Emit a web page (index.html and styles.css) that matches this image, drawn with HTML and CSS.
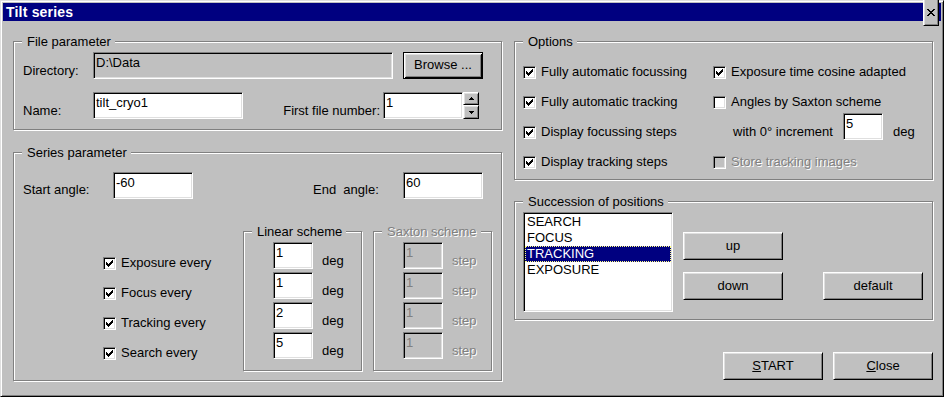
FILE: index.html
```html
<!DOCTYPE html>
<html lang="en">
<head>
    <meta charset="UTF-8">
    <title>Tilt series</title>
    <link rel="stylesheet" href="styles.css">
</head>
<body>
    <div class="window">
        <div class="titlebar">
            <span class="title">Tilt series</span>
            <span class="btn title-close">
                <svg width="8" height="7" viewBox="0 0 8 7"><path d="M0 0h2v1H0zM6 0h2v1H6zM1 1h2v1H1zM5 1h2v1H5zM2 2h4v1H2zM3 3h2v1H3zM2 4h4v1H2zM1 5h2v1H1zM5 5h2v1H5zM0 6h2v1H0zM6 6h2v1H6z"/></svg>
            </span>
        </div>

        <div class="client">
            <div class="col col-left">
                <div class="group group-file">
                    <span class="caption">File parameter</span>
                    <div class="row row-dir">
                        <span class="lbl w70">Directory:</span>
                        <span class="edit off w300">D:\Data</span>
                        <span class="btn btn-default btn-browse">Browse ...</span>
                    </div>
                    <div class="row row-name">
                        <span class="lbl w70">Name:</span>
                        <span class="edit w150">tilt_cryo1</span>
                        <span class="lbl lbl-first">First file number:</span>
                        <span class="edit w80">1</span>
                        <span class="spin">
                            <span class="btn spin-up"><svg width="5" height="3" viewBox="0 0 5 3"><path d="M2 0h1v1H2zM1 1h3v1H1zM0 2h5v1H0z"/></svg></span>
                            <span class="btn spin-down"><svg width="5" height="3" viewBox="0 0 5 3"><path d="M0 0h5v1H0zM1 1h3v1H1zM2 2h1v1H2z"/></svg></span>
                        </span>
                    </div>
                </div>

                <div class="group group-series">
                    <span class="caption">Series parameter</span>
                    <div class="row row-angle">
                        <span class="lbl lbl-angle w90">Start angle:</span>
                        <span class="edit w80">-60</span>
                        <span class="lbl lbl-angle lbl-end w90">End&nbsp; angle:</span>
                        <span class="edit w80">60</span>
                    </div>
                    <div class="row row-schemes">
                        <div class="checks">
                            <div class="check-row"><span class="chk on"><svg width="7" height="7" viewBox="0 0 7 7"><path d="M0 2h1v3H0zM1 3h1v3H1zM2 4h1v3H2zM3 3h1v3H3zM4 2h1v3H4zM5 1h1v3H5zM6 0h1v3H6z"/></svg></span><span>Exposure every</span></div>
                            <div class="check-row"><span class="chk on"><svg width="7" height="7" viewBox="0 0 7 7"><path d="M0 2h1v3H0zM1 3h1v3H1zM2 4h1v3H2zM3 3h1v3H3zM4 2h1v3H4zM5 1h1v3H5zM6 0h1v3H6z"/></svg></span><span>Focus every</span></div>
                            <div class="check-row"><span class="chk on"><svg width="7" height="7" viewBox="0 0 7 7"><path d="M0 2h1v3H0zM1 3h1v3H1zM2 4h1v3H2zM3 3h1v3H3zM4 2h1v3H4zM5 1h1v3H5zM6 0h1v3H6z"/></svg></span><span>Tracking every</span></div>
                            <div class="check-row"><span class="chk on"><svg width="7" height="7" viewBox="0 0 7 7"><path d="M0 2h1v3H0zM1 3h1v3H1zM2 4h1v3H2zM3 3h1v3H3zM4 2h1v3H4zM5 1h1v3H5zM6 0h1v3H6z"/></svg></span><span>Search every</span></div>
                        </div>

                        <div class="group scheme">
                            <span class="caption">Linear scheme</span>
                            <div class="field-row"><span class="edit w40">1</span><span class="unit">deg</span></div>
                            <div class="field-row"><span class="edit w40">1</span><span class="unit">deg</span></div>
                            <div class="field-row"><span class="edit w40">2</span><span class="unit">deg</span></div>
                            <div class="field-row"><span class="edit w40">5</span><span class="unit">deg</span></div>
                        </div>

                        <div class="group scheme scheme-saxton">
                            <span class="caption disabled">Saxton scheme</span>
                            <div class="field-row"><span class="edit off dim w40">1</span><span class="unit disabled">step</span></div>
                            <div class="field-row"><span class="edit off dim w40">1</span><span class="unit disabled">step</span></div>
                            <div class="field-row"><span class="edit off dim w40">1</span><span class="unit disabled">step</span></div>
                            <div class="field-row"><span class="edit off dim w40">1</span><span class="unit disabled">step</span></div>
                        </div>
                    </div>
                </div>
            </div>

            <div class="col col-right">
                <div class="group group-options">
                    <span class="caption">Options</span>
                    <div class="opt-cols">
                        <div class="opt-left">
                            <div class="check-row"><span class="chk on"><svg width="7" height="7" viewBox="0 0 7 7"><path d="M0 2h1v3H0zM1 3h1v3H1zM2 4h1v3H2zM3 3h1v3H3zM4 2h1v3H4zM5 1h1v3H5zM6 0h1v3H6z"/></svg></span><span>Fully automatic focussing</span></div>
                            <div class="check-row"><span class="chk on"><svg width="7" height="7" viewBox="0 0 7 7"><path d="M0 2h1v3H0zM1 3h1v3H1zM2 4h1v3H2zM3 3h1v3H3zM4 2h1v3H4zM5 1h1v3H5zM6 0h1v3H6z"/></svg></span><span>Fully automatic tracking</span></div>
                            <div class="check-row"><span class="chk on"><svg width="7" height="7" viewBox="0 0 7 7"><path d="M0 2h1v3H0zM1 3h1v3H1zM2 4h1v3H2zM3 3h1v3H3zM4 2h1v3H4zM5 1h1v3H5zM6 0h1v3H6z"/></svg></span><span>Display focussing steps</span></div>
                            <div class="check-row"><span class="chk on"><svg width="7" height="7" viewBox="0 0 7 7"><path d="M0 2h1v3H0zM1 3h1v3H1zM2 4h1v3H2zM3 3h1v3H3zM4 2h1v3H4zM5 1h1v3H5zM6 0h1v3H6z"/></svg></span><span>Display tracking steps</span></div>
                        </div>
                        <div class="opt-right">
                            <div class="check-row"><span class="chk on"><svg width="7" height="7" viewBox="0 0 7 7"><path d="M0 2h1v3H0zM1 3h1v3H1zM2 4h1v3H2zM3 3h1v3H3zM4 2h1v3H4zM5 1h1v3H5zM6 0h1v3H6z"/></svg></span><span>Exposure time cosine adapted</span></div>
                            <div class="check-row check-short"><span class="chk"></span><span>Angles by Saxton scheme</span></div>
                            <div class="incr-row">
                                <span class="lbl w110">with 0° increment</span>
                                <span class="edit w40">5</span>
                                <span class="unit">deg</span>
                            </div>
                            <div class="check-row check-store"><span class="chk off"></span><span class="disabled">Store tracking images</span></div>
                        </div>
                    </div>
                </div>

                <div class="group group-succession">
                    <span class="caption">Succession of positions</span>
                    <div class="succ">
                        <div class="listbox">
                            <div class="item">SEARCH</div>
                            <div class="item">FOCUS</div>
                            <div class="item sel">TRACKING</div>
                            <div class="item">EXPOSURE</div>
                        </div>
                        <div class="succ-btns">
                            <span class="btn w100">up</span>
                            <span class="btn w100 btn-down">down</span>
                        </div>
                        <span class="btn w100 btn-reset">default</span>
                    </div>
                </div>

                <div class="actions">
                    <span class="btn w100"><u>S</u>TART</span>
                    <span class="btn w100"><u>C</u>lose</span>
                </div>
            </div>
        </div>
    </div>
</body>
</html>
```

FILE: styles.css
```css
* {
  box-sizing: border-box;
}

body {
  margin: 0;
  background: #c0c0c0;
  font: 13px/15px "Liberation Sans", Arial, sans-serif;
  color: #000;
}

.window {
  width: 944px;
  height: 397px;
  border: 1px solid;
  border-color: #dfdfdf #000 #000 #dfdfdf;
  box-shadow: inset 1px 1px #fff, inset -1px -1px #808080;
  padding: 2px;
  background: #c0c0c0;
}

/* title bar */
.titlebar {
  height: 18px;
  background: #000080;
  color: #fff;
  display: flex;
  align-items: center;
  justify-content: space-between;
  padding: 0 2px 0 3px;
}

.title {
  font-weight: bold;
  font-size: 14px;
  letter-spacing: 0.2px;
}

.title-close {
  width: 16px;
  height: 14px;
}

/* controls */
.btn {
  display: flex;
  align-items: center;
  justify-content: center;
  height: 28px;
  padding-bottom: 2px;
  border: 1px solid;
  border-color: #fff #000 #000 #fff;
  box-shadow: inset 1px 1px #dfdfdf, inset -1px -1px #808080;
  background: #c0c0c0;
}

.title-close.btn,
.spin .btn {
  padding: 0;
}

.btn-default {
  border-color: #000;
  box-shadow: inset 1px 1px #fff, inset -1px -1px #000, inset 2px 2px #dfdfdf, inset -2px -2px #808080;
}

.btn-browse {
  width: 80px;
  height: 27px;
  margin-left: 10px;
}

.edit {
  display: block;
  height: 27px;
  padding: 2px 2px;
  border: 1px solid;
  border-color: #808080 #fff #fff #808080;
  box-shadow: inset 1px 1px #000, inset -1px -1px #dfdfdf;
  background: #fff;
  white-space: nowrap;
}

.edit.off {
  background: #c0c0c0;
}

.edit.dim {
  color: #808080;
}

.disabled {
  color: #808080;
  text-shadow: 1px 1px 0 #fff;
}

.chk {
  display: block;
  flex: none;
  width: 13px;
  height: 13px;
  border: 1px solid;
  border-color: #808080 #fff #fff #808080;
  box-shadow: inset 1px 1px #000, inset -1px -1px #dfdfdf;
  background: #fff;
}

.chk svg {
  display: block;
  margin: 2px;
}

.chk.off {
  background: #c0c0c0;
}

.w40 { width: 40px; }
.w70 { width: 70px; }
.w80 { width: 80px; }
.w90 { width: 90px; }
.w100 { width: 100px; }
.w110 { width: 110px; }
.w150 { width: 150px; }
.w300 { width: 300px; }

/* layout */
.client {
  display: flex;
  gap: 12px;
  padding: 20px 0 0 10px;
}

.col-left {
  width: 489px;
}

.col-right {
  width: 419px;
}

.group {
  position: relative;
  border: 1px solid #808080;
  box-shadow: inset 1px 1px #fff, 1px 1px #fff;
}

.group .caption {
  position: absolute;
  top: -8px;
  left: 8px;
  padding: 0 4px 0 5px;
  background: #c0c0c0;
  white-space: nowrap;
}

.row {
  display: flex;
  align-items: flex-start;
}

.lbl {
  display: block;
  padding-top: 11px;
  white-space: nowrap;
}

.lbl-angle {
  padding-top: 10px;
}

/* file parameter */
.group-file {
  height: 89px;
}

.row-dir {
  margin: 10px 0 0 9px;
}

.row-name {
  margin: 13px 0 0 9px;
}

.lbl-first {
  width: 140px;
  padding-right: 3px;
  text-align: right;
}

.spin {
  display: flex;
  flex-direction: column;
  width: 16px;
}

.spin-up {
  height: 13px;
}

.spin-down {
  height: 14px;
}

.spin svg {
  display: block;
}

/* series parameter */
.group-series {
  height: 229px;
  margin-top: 22px;
}

.row-angle {
  margin: 19px 0 0 9px;
}

.lbl-end {
  margin-left: 120px;
}

.row-schemes {
  margin-top: 32px;
}

.checks {
  width: 140px;
  margin-left: 89px;
  padding-top: 24px;
}

.check-row {
  display: flex;
  align-items: flex-start;
  height: 30px;
  white-space: nowrap;
}

.check-row .chk {
  margin: 2px 5px 0 0;
}

.scheme {
  width: 119px;
  height: 140px;
  padding: 10px 0 0 29px;
}

.scheme-saxton {
  margin-left: 11px;
}

.field-row {
  display: flex;
  align-items: flex-start;
  margin-bottom: 3px;
}

.unit {
  display: block;
  margin-left: 9px;
  padding-top: 11px;
}

/* options */
.group-options {
  height: 139px;
}

.opt-cols {
  display: flex;
  margin-top: 22px;
  padding-left: 8px;
}

.opt-left {
  width: 190px;
}

.opt-right .check-short {
  height: 19px;
}

.incr-row {
  display: flex;
  align-items: flex-start;
  padding-left: 20px;
}

.incr-row .unit {
  margin-left: 10px;
}

.check-store {
  margin-top: 14px;
}

/* succession */
.group-succession {
  height: 119px;
  margin-top: 21px;
}

.succ {
  display: flex;
  align-items: flex-start;
  padding-left: 8px;
}

.listbox {
  width: 150px;
  height: 100px;
  margin-top: 10px;
  border: 1px solid;
  border-color: #808080 #fff #fff #808080;
  box-shadow: inset 1px 1px #000, inset -1px -1px #dfdfdf;
  background: #fff;
  padding: 1px;
}

.item {
  height: 16px;
  line-height: 16px;
  padding-left: 2px;
}

.item.sel {
  background: #000080;
  color: #fff;
  outline: 1px dotted #ffff80;
  outline-offset: -1px;
}

.succ-btns {
  margin: 30px 0 0 10px;
}

.btn-down {
  margin-top: 12px;
}

.btn-reset {
  margin: 70px 0 0 40px;
}

/* bottom buttons */
.actions {
  display: flex;
  justify-content: flex-end;
  gap: 10px;
  margin-top: 32px;
}
```
